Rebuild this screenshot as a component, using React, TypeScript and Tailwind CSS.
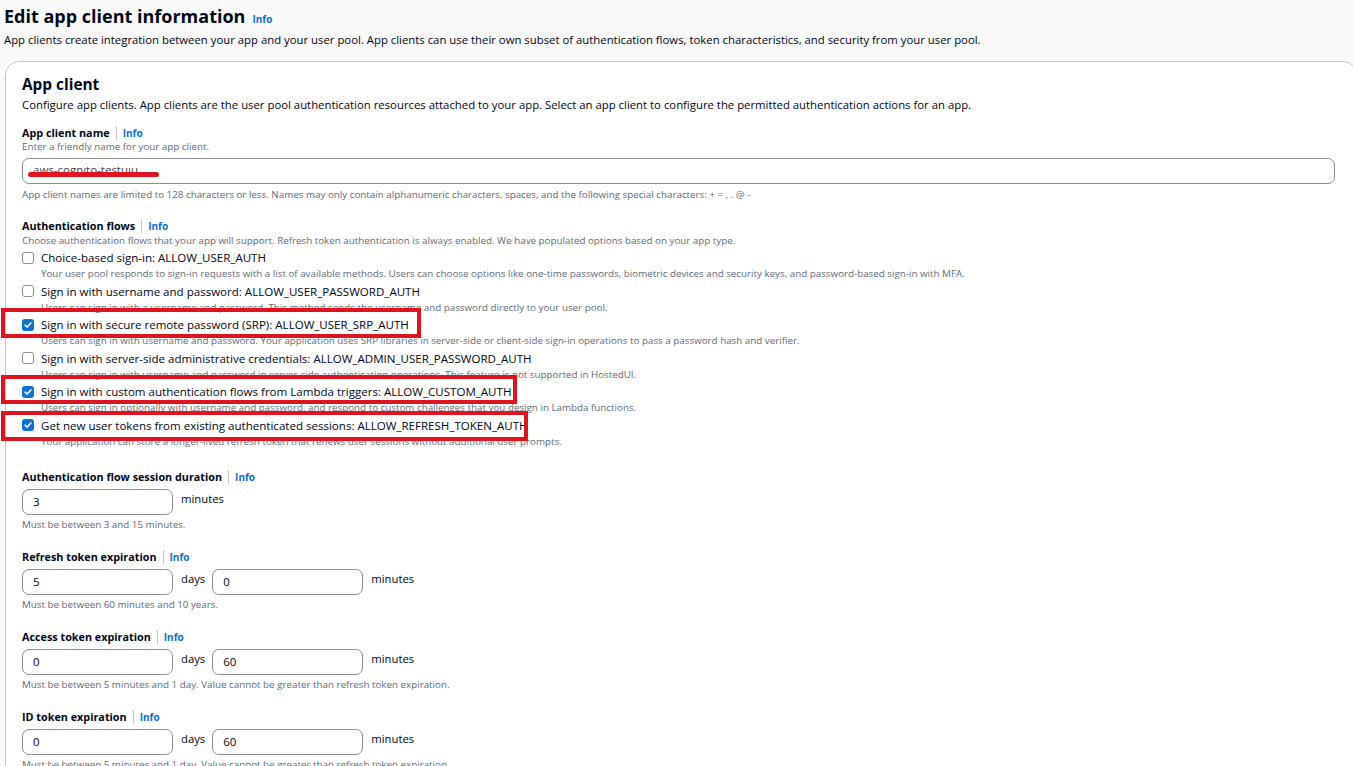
import React from 'react';

const font = { fontFamily: '"Open Sans", "Noto Sans", Arial, sans-serif' };

const InfoLink = () => (
  <span className="text-[10px] font-bold text-[#0972d3]">Info</span>
);

const FieldLabel = ({ label }: { label: string }) => (
  <div className="flex items-center text-[10.8px] font-bold leading-[14px] text-[#000716]">
    <span>{label}</span>
    <span className="mx-[6px] h-[14px] w-px bg-[#c6c6cd]" />
    <InfoLink />
  </div>
);

const Checkbox = ({ checked }: { checked: boolean }) =>
  checked ? (
    <span className="flex h-[12px] w-[12px] shrink-0 items-center justify-center rounded-[3px] bg-[#0972d3]">
      <svg viewBox="0 0 12 12" className="h-[10px] w-[10px]" fill="none">
        <path d="M2.5 6.2 L5 8.5 L9.5 3.5" stroke="white" strokeWidth="1.8" strokeLinecap="round" strokeLinejoin="round" />
      </svg>
    </span>
  ) : (
    <span className="h-[12px] w-[12px] shrink-0 rounded-[3px] border-[1.5px] border-[#8c8c94] bg-white" />
  );

const flows = [
  {
    label: 'Choice-based sign-in: ALLOW_USER_AUTH',
    desc: 'Your user pool responds to sign-in requests with a list of available methods. Users can choose options like one-time passwords, biometric devices and security keys, and password-based sign-in with MFA.',
    checked: false,
  },
  {
    label: 'Sign in with username and password: ALLOW_USER_PASSWORD_AUTH',
    desc: 'Users can sign in with a username and password. This method sends the username and password directly to your user pool.',
    checked: false,
  },
  {
    label: 'Sign in with secure remote password (SRP): ALLOW_USER_SRP_AUTH',
    desc: 'Users can sign in with username and password. Your application uses SRP libraries in server-side or client-side sign-in operations to pass a password hash and verifier.',
    checked: true,
  },
  {
    label: 'Sign in with server-side administrative credentials: ALLOW_ADMIN_USER_PASSWORD_AUTH',
    desc: 'Users can sign in with username and password in server-side authentication operations. This feature is not supported in HostedUI.',
    checked: false,
  },
  {
    label: 'Sign in with custom authentication flows from Lambda triggers: ALLOW_CUSTOM_AUTH',
    desc: 'Users can sign in optionally with username and password, and respond to custom challenges that you design in Lambda functions.',
    checked: true,
  },
  {
    label: 'Get new user tokens from existing authenticated sessions: ALLOW_REFRESH_TOKEN_AUTH',
    desc: 'Your application can store a longer-lived refresh token that renews user sessions without additional user prompts.',
    checked: true,
  },
];

const NumInput = ({ value }: { value: string }) => (
  <div className="flex h-[26px] w-[151px] shrink-0 items-center rounded-[7px] border border-[#8c8c94] bg-white px-[10px] text-[11.5px] text-[#000716]">
    {value}
  </div>
);

const Unit = ({ text }: { text: string }) => (
  <span className="ml-[8px] pt-[3px] text-[11.3px] leading-[14px] text-[#000716]">{text}</span>
);

const Hint = ({ text, className = '' }: { text: string; className?: string }) => (
  <div className={`text-[9.8px] leading-[14px] text-[#5f6b7a] ${className}`}>{text}</div>
);

const TokenSection = ({
  label,
  values,
  hint,
}: {
  label: string;
  values: string[];
  hint: string;
}) => (
  <div className="mt-[18px]">
    <FieldLabel label={label} />
    <div className="mt-[5px] flex items-start">
      <NumInput value={values[0]} />
      {values.length > 1 ? (
        <>
          <Unit text="days" />
          <div className="ml-[7px]">
            <NumInput value={values[1]} />
          </div>
          <Unit text="minutes" />
        </>
      ) : (
        <Unit text="minutes" />
      )}
    </div>
    <Hint text={hint} className="mt-[3px]" />
  </div>
);

export default function App() {
  return (
    <div className="relative h-[766px] overflow-hidden bg-[#fafafa] text-[#000716]" style={font}>
      <div className="px-[4px] pt-[4px]">
        <div className="flex items-baseline gap-[7px]">
          <h1 className="text-[18px] font-bold leading-[24px]">Edit app client information</h1>
          <InfoLink />
        </div>
        <p className="mt-[4px] text-[11.35px] leading-[16px]">
          App clients create integration between your app and your user pool. App clients can use their own subset of authentication flows, token characteristics, and security from your user pool.
        </p>
      </div>

      <div className="ml-[5px] mr-[-4px] mt-[13px] rounded-[14px] border border-[#c6c6cd] bg-white pl-[16px] pr-[21px] pt-[13px] pb-[40px]">
        <h2 className="text-[15.4px] font-bold leading-[20px]">App client</h2>
        <p className="mt-[2px] text-[11.35px] leading-[16px]">
          Configure app clients. App clients are the user pool authentication resources attached to your app. Select an app client to configure the permitted authentication actions for an app.
        </p>

        <div className="mt-[13px]">
          <FieldLabel label="App client name" />
          <Hint text="Enter a friendly name for your app client." />
          <div className="relative mt-[4px] h-[26px] overflow-hidden rounded-[7px] border border-[#8c8c94] bg-white">
            <div className="absolute left-[10px] top-[8px] h-[5px] overflow-hidden">
              <div className="-mt-[4px] text-[11.5px] leading-[14px] text-[#414750]">aws-cognito-testuiu</div>
            </div>
            <span className="absolute left-[5px] top-[13px] h-[5px] w-[131px] rounded-full bg-[#e0141e]" />
          </div>
          <Hint
            className="mt-[4px]"
            text="App client names are limited to 128 characters or less. Names may only contain alphanumeric characters, spaces, and the following special characters: + = , . @ -"
          />
        </div>

        <div className="mt-[17px]">
          <FieldLabel label="Authentication flows" />
          <Hint
            className="mt-[1px]"
            text="Choose authentication flows that your app will support. Refresh token authentication is always enabled. We have populated options based on your app type."
          />
          <div className="mt-[1px]">
            {flows.map((f) => (
              <div key={f.label}>
                <div className="flex items-center gap-[7px] text-[11.55px] leading-[17px]">
                  <Checkbox checked={f.checked} />
                  <span>{f.label}</span>
                </div>
                <div className="pl-[19px] text-[9.8px] leading-[16.5px] text-[#5f6b7a]">{f.desc}</div>
              </div>
            ))}
          </div>
        </div>

        <div className="mt-[20px]">
          <FieldLabel label="Authentication flow session duration" />
          <div className="mt-[5px] flex items-start">
            <NumInput value="3" />
            <Unit text="minutes" />
          </div>
          <Hint text="Must be between 3 and 15 minutes." className="mt-[3px]" />
        </div>

        <TokenSection label="Refresh token expiration" values={['5', '0']} hint="Must be between 60 minutes and 10 years." />
        <TokenSection
          label="Access token expiration"
          values={['0', '60']}
          hint="Must be between 5 minutes and 1 day. Value cannot be greater than refresh token expiration."
        />
        <TokenSection
          label="ID token expiration"
          values={['0', '60']}
          hint="Must be between 5 minutes and 1 day. Value cannot be greater than refresh token expiration."
        />
      </div>

      {/* annotation boxes */}
      <div className="pointer-events-none absolute left-[1px] top-[308px] h-[30px] w-[420px] border-[4px] border-[#e0141e]" />
      <div className="pointer-events-none absolute left-[1px] top-[375px] h-[29px] w-[516px] border-[4px] border-[#e0141e]" />
      <div className="pointer-events-none absolute left-[1px] top-[411px] h-[30px] w-[527px] border-[4px] border-[#e0141e]" />
    </div>
  );
}
